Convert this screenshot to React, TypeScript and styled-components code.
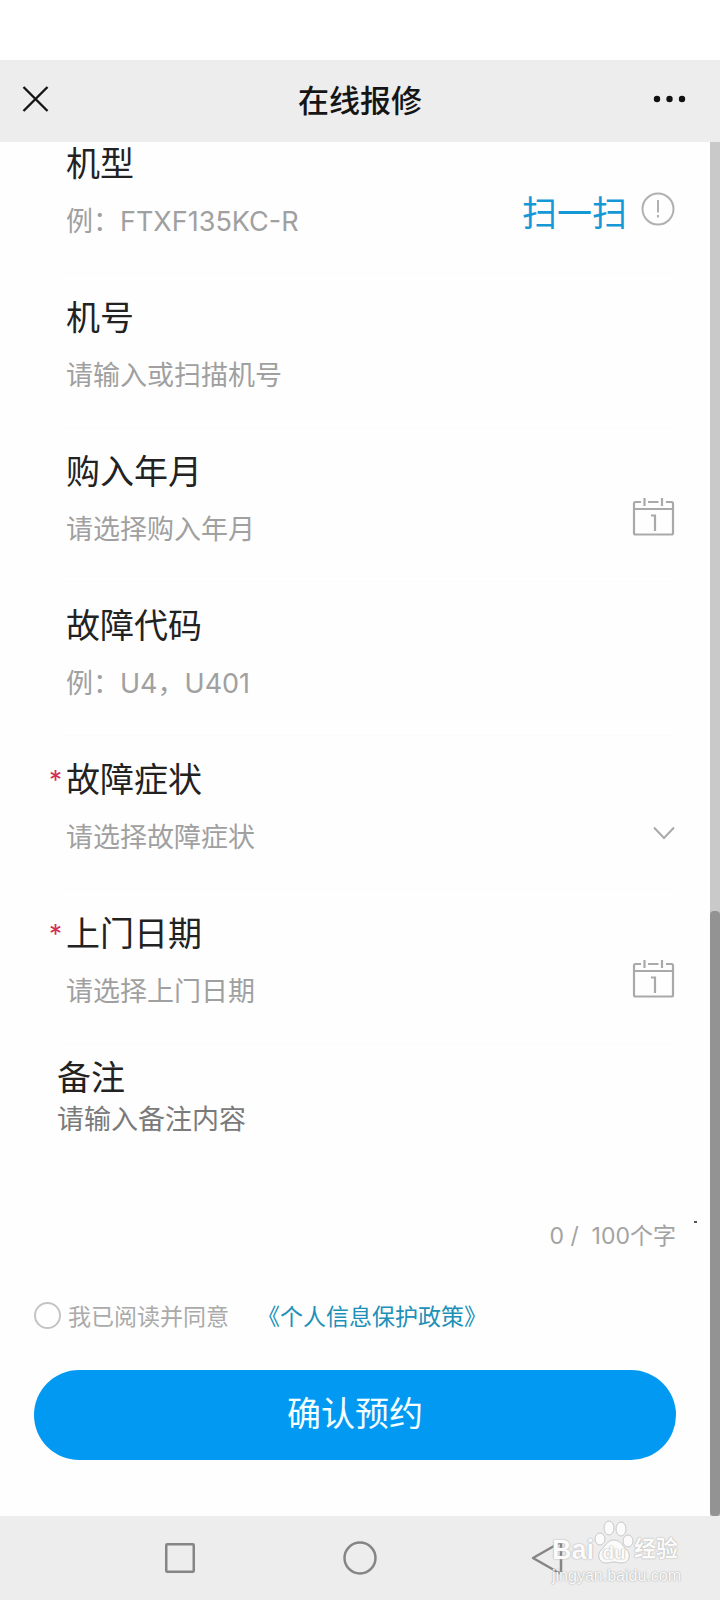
import React, { useState } from "react";
import styled, { createGlobalStyle } from "styled-components";

const GlobalStyle = createGlobalStyle`
  *, *::before, *::after { box-sizing: border-box; }
  body {
    margin: 0;
    background: #fefefe;
    color: #222;
    font-family: Inter, "Noto Sans CJK SC", sans-serif;
  }
  button, input, select, textarea { font-family: inherit; }
`;

const Page = styled.div`
  display: flex;
  flex-direction: column;
  min-height: 100vh;
`;

const StatusBar = styled.div`
  height: 60px;
  background: #fff;
`;

const Header = styled.header`
  display: grid;
  grid-template-columns: 80px 1fr 80px;
  align-items: center;
  height: 82px;
  padding: 0 12px;
  background: #ededed;
`;

const Title = styled.h1`
  margin: 0;
  font-size: 31px;
  line-height: 44px;
  font-weight: 500;
  text-align: center;
  color: #151515;
`;

const IconButton = styled.button<{ $align?: string }>`
  display: flex;
  align-items: center;
  justify-content: ${(p) => p.$align ?? "center"};
  padding: 0;
  border: 0;
  background: none;
  cursor: pointer;
`;

const Body = styled.div`
  display: flex;
  flex: 1;
`;

const Form = styled.form`
  flex: 1;
  min-width: 0;
  padding: 0 34px 56px;
`;

const Field = styled.div`
  position: relative;
  height: 132px;
  margin: 0 1px 22px 32px;
  border-bottom: 1px solid #fbfbfb;
  &:last-of-type { border-bottom: 4px solid #f9f9f9; }
`;

const Label = styled.label`
  display: block;
  font-size: 34px;
  line-height: 44px;
  color: #222;
`;

const Required = styled.span`
  position: absolute;
  right: 100%;
  top: 0;
  padding-right: 4px;
  font-size: 26px;
  line-height: 44px;
  color: #d22f55;
`;

const Row = styled.div`
  display: flex;
  align-items: center;
  height: 44px;
  margin-top: 13px;
`;

const TextInput = styled.input`
  flex: 1;
  min-width: 0;
  height: 44px;
  padding: 0;
  border: 0;
  outline: 0;
  background: none;
  font-size: 27px;
  color: #222;
  &::placeholder { color: #a0a0a0; opacity: 1; }
`;

const Select = styled.select`
  flex: 1;
  min-width: 0;
  height: 44px;
  padding: 0;
  border: 0;
  outline: 0;
  appearance: none;
  background: none;
  font-size: 27px;
  color: #a0a0a0;
`;

const RowActions = styled.div<{ $lift: number }>`
  display: flex;
  align-items: center;
  gap: 14px;
  height: 44px;
  margin-bottom: ${(p) => p.$lift}px;
`;

const ScanButton = styled.button`
  padding: 8px 0 0;
  border: 0;
  background: none;
  font-size: 35px;
  line-height: 44px;
  color: #1598d6;
  cursor: pointer;
`;

const Remark = styled.section`
  margin: -10px 0 0 23px;
`;

const RemarkInput = styled.textarea`
  display: block;
  width: 100%;
  height: 114px;
  padding: 0;
  border: 0;
  outline: 0;
  resize: none;
  background: none;
  font-size: 27px;
  line-height: 40px;
  color: #222;
  &::placeholder { color: #7a7a7a; opacity: 1; }
`;

const Counter = styled.p`
  position: relative;
  margin: 0;
  font-size: 23px;
  line-height: 44px;
  text-align: right;
  white-space: pre;
  color: #a3a3a3;
  &::after {
    content: "";
    position: absolute;
    left: calc(100% + 18px);
    top: 7px;
    width: 3px;
    height: 2px;
    background: #555;
  }
`;

const Consent = styled.div`
  display: flex;
  align-items: center;
  gap: 28px;
  height: 44px;
  margin: 35px 0 33px;
  font-size: 23px;
`;

const ConsentLabel = styled.label`
  display: flex;
  align-items: center;
  gap: 7px;
  color: #aaa;
`;

const Tick = styled.input`
  appearance: none;
  width: 27px;
  height: 27px;
  margin: 0;
  border: 2px solid #c4c4c4;
  border-radius: 50%;
  &:checked { background: #0299f2; }
`;

const PolicyLink = styled.a`
  color: #2090b8;
  text-decoration: none;
`;

const Submit = styled.button`
  display: block;
  width: 100%;
  height: 90px;
  padding: 0 0 8px;
  border: 0;
  border-radius: 45px;
  background: #0299f2;
  font-size: 34px;
  color: #f4ffff;
  cursor: pointer;
`;

const Track = styled.div`
  display: flex;
  flex-direction: column;
  justify-content: flex-end;
  width: 10px;
  background: #c9c9c9;
`;

const Thumb = styled.div`
  height: 44%;
  border-radius: 4px;
  background: #939393;
`;

const NavBar = styled.nav`
  position: relative;
  display: grid;
  grid-template-columns: repeat(3, 1fr);
  height: 84px;
  padding: 0 12.5%;
  background: #ededed;
`;

const Watermark = styled.div`
  position: absolute;
  right: 38px;
  top: 6px;
  width: 130px;
  color: #fbfbfb;
  text-shadow: 0 0 1px #aaa, 0 0 2px #bbb;
  pointer-events: none;
`;

const Brand = styled.div`
  display: flex;
  align-items: flex-end;
  height: 44px;
  font-size: 27px;
  line-height: 32px;
  font-weight: 700;
  font-family: "Liberation Sans", "Noto Sans CJK SC", sans-serif;
`;

const Paw = styled.span`
  position: relative;
  flex: none;
  width: 40px;
  height: 46px;
  svg { display: block; }
`;

const PawText = styled.span`
  position: absolute;
  left: 0;
  right: 0;
  bottom: 2px;
  font-size: 19px;
  line-height: 22px;
  text-align: center;
`;

const BrandCjk = styled.span`
  font-size: 22px;
  line-height: 34px;
`;

const Url = styled.div`
  font-family: "Liberation Sans", sans-serif;
  font-size: 16px;
  line-height: 20px;
`;

const Calendar = () => (
  <svg width="43" height="40" viewBox="0 0 43 40" fill="none" stroke="#a9a9a9" strokeWidth="2.2">
    <path d="M9 5H3.500Q2 5 2 6.500V36Q2 37.500 3.500 37.500H39.500Q41 37.500 41 36V6.500Q41 5 39.500 5H34M16 5H26.500" />
    <path d="M2 12H41M12.500 1V9M30 1V9" />
    <path d="M19 18.500H23V34" />
  </svg>
);

const Alert = () => (
  <svg width="34" height="34" viewBox="0 0 34 34" fill="none" stroke="#b0b0b0" strokeWidth="2">
    <circle cx="17" cy="17" r="15.500" />
    <path d="M17 8V20.500M17 23V25.500" />
  </svg>
);

const Chevron = () => (
  <svg width="22" height="14" viewBox="0 0 22 14" fill="none" stroke="#aaa" strokeWidth="2">
    <path d="M1 1.500L11 12L21 1.500" />
  </svg>
);

interface FieldProps {
  id: string;
  label: string;
  required?: boolean;
  children: React.ReactNode;
}

const FormField = ({ id, label, required, children }: FieldProps) => (
  <Field>
    {required && <Required>*</Required>}
    <Label htmlFor={id}>{label}</Label>
    <Row>{children}</Row>
  </Field>
);

export default function App() {
  const [remark, setRemark] = useState("");
  return (
    <Page>
      <GlobalStyle />
      <StatusBar />
      <Header>
        <IconButton aria-label="关闭" $align="flex-start">
          <svg width="48" height="44" viewBox="0 0 48 44" stroke="#151515" strokeWidth="2.4">
            <path d="M11.500 8L35.500 32M35.500 8L11.500 32" />
          </svg>
        </IconButton>
        <Title>在线报修</Title>
        <IconButton aria-label="更多" $align="flex-end">
          <svg width="60" height="44" viewBox="0 0 60 44" fill="#111">
            <circle cx="9" cy="20" r="3.200" />
            <circle cx="21.500" cy="20" r="3.200" />
            <circle cx="34" cy="20" r="3.200" />
          </svg>
        </IconButton>
      </Header>
      <Body>
        <Form onSubmit={(e) => e.preventDefault()}>
          <FormField id="model" label="机型">
            <TextInput id="model" placeholder="例：FTXF135KC-R" />
            <RowActions $lift={24}>
              <ScanButton type="button">扫一扫</ScanButton>
              <IconButton type="button" aria-label="说明">
                <Alert />
              </IconButton>
            </RowActions>
          </FormField>
          <FormField id="serial" label="机号">
            <TextInput id="serial" placeholder="请输入或扫描机号" />
          </FormField>
          <FormField id="bought" label="购入年月">
            <TextInput id="bought" placeholder="请选择购入年月" />
            <RowActions $lift={24}>
              <IconButton type="button" aria-label="选择购入年月">
                <Calendar />
              </IconButton>
            </RowActions>
          </FormField>
          <FormField id="code" label="故障代码">
            <TextInput id="code" placeholder="例：U4，U401" />
          </FormField>
          <FormField id="symptom" label="故障症状" required>
            <Select id="symptom" defaultValue="">
              <option value="">请选择故障症状</option>
            </Select>
            <RowActions $lift={8}>
              <Chevron />
            </RowActions>
          </FormField>
          <FormField id="visit" label="上门日期" required>
            <TextInput id="visit" placeholder="请选择上门日期" />
            <RowActions $lift={24}>
              <IconButton type="button" aria-label="选择上门日期">
                <Calendar />
              </IconButton>
            </RowActions>
          </FormField>
          <Remark>
            <Label htmlFor="remark">备注</Label>
            <RemarkInput
              id="remark"
              maxLength={100}
              placeholder="请输入备注内容"
              value={remark}
              onChange={(e) => setRemark(e.target.value)}
            />
            <Counter>{`${remark.length} /  100个字`}</Counter>
          </Remark>
          <Consent>
            <ConsentLabel>
              <Tick type="checkbox" />
              我已阅读并同意
            </ConsentLabel>
            <PolicyLink href="#policy">《个人信息保护政策》</PolicyLink>
          </Consent>
          <Submit type="submit">确认预约</Submit>
        </Form>
        <Track>
          <Thumb />
        </Track>
      </Body>
      <NavBar>
        <IconButton aria-label="最近任务">
          <svg width="36" height="36" viewBox="0 0 36 36" fill="none" stroke="#858585" strokeWidth="2.500">
            <rect x="4.250" y="4.250" width="27.500" height="27.500" rx="1" />
          </svg>
        </IconButton>
        <IconButton aria-label="主屏幕">
          <svg width="36" height="36" viewBox="0 0 36 36" fill="none" stroke="#858585" strokeWidth="2.500">
            <circle cx="18" cy="18" r="15.500" />
          </svg>
        </IconButton>
        <IconButton aria-label="返回">
          <svg width="48" height="40" viewBox="0 0 48 40" fill="none" stroke="#858585" strokeWidth="2.500" strokeLinejoin="round">
            <path d="M17 20L45 4V36Z" />
          </svg>
        </IconButton>
        <Watermark>
          <Brand>
            Bai
            <Paw>
              <svg width="40" height="46" viewBox="0 0 40 46" fill="#fbfbfb" stroke="#c8c8c8" strokeWidth="1">
                <ellipse cx="15" cy="8" rx="5" ry="7" />
                <ellipse cx="27" cy="9" rx="5" ry="7" />
                <ellipse cx="6" cy="19" rx="5" ry="6" />
                <ellipse cx="34" cy="21" rx="5" ry="6" />
                <path d="M20 20C13 20 12 26 7 30C3 34 4 43 12 43C16 43 17 42 20 42C23 42 24 43 28 43C36 43 37 34 33 30C28 26 27 20 20 20Z" />
              </svg>
              <PawText>du</PawText>
            </Paw>
            <BrandCjk>经验</BrandCjk>
          </Brand>
          <Url>jingyan.baidu.com</Url>
        </Watermark>
      </NavBar>
    </Page>
  );
}
